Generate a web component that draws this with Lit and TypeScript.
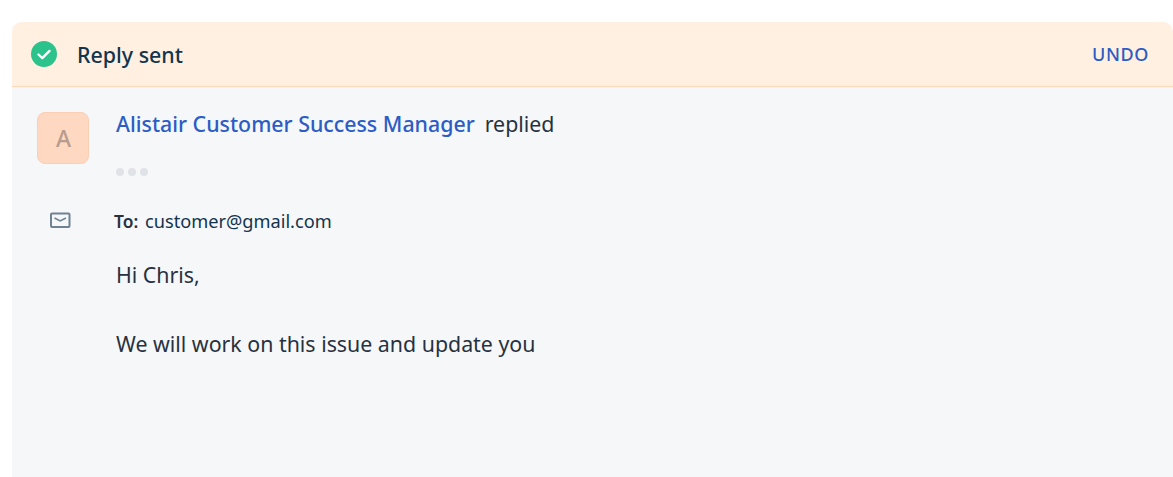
import { LitElement, css, html } from "lit";
import { customElement } from "lit/decorators.js";

@customElement("app-root")
export class AppRoot extends LitElement {
  static styles = css`
    :host {
      display: block;
      height: 477px;
      overflow: hidden;
      background: #fff;
      font-family: "Noto Sans", sans-serif;
      color: #27313f;
    }
    .wrap {
      padding: 22px 0 0 12px;
    }
    .panel {
      height: 455px;
      background: #f5f7f9;
      border-radius: 10px 10px 0 0;
    }
    .banner {
      height: 64px;
      box-sizing: content-box;
      display: flex;
      align-items: center;
      padding: 0 24px 0 19px;
      background: #fff0e1;
      border-bottom: 1px solid #ffd9b5;
      border-radius: 10px 10px 0 0;
    }
    .check {
      width: 26px;
      height: 26px;
      margin-right: 20px;
    }
    .title {
      flex: 1;
      padding-top: 1px;
      font-size: 21.4px;
      font-weight: 500;
      color: #12344d;
    }
    .undo {
      font-size: 18px;
      font-weight: 500;
      letter-spacing: 0.6px;
      color: #2c5cc5;
    }
    .thread {
      display: grid;
      grid-template-columns: 52px 1fr;
      column-gap: 27px;
      padding: 25px 0 0 25px;
    }
    .avatar {
      width: 52px;
      height: 52px;
      box-sizing: border-box;
      display: flex;
      align-items: center;
      justify-content: center;
      padding-left: 1px;
      background: #ffd8c1;
      border: 1px solid #fbcfb4;
      border-radius: 8px;
      font-size: 23px;
      font-weight: 500;
      color: #b89c8d;
    }
    .head {
      display: flex;
      align-items: baseline;
      gap: 10px;
      font-size: 21.35px;
      line-height: 24px;
    }
    .name {
      font-weight: 500;
      color: #2c5cc5;
    }
    .dots {
      display: flex;
      gap: 4px;
      margin-top: 32px;
    }
    .dots span {
      width: 8px;
      height: 8px;
      border-radius: 50%;
      background: #dfe2e7;
    }
    .mail {
      display: flex;
      justify-content: center;
      padding: 35px 7px 0 0;
    }
    .mail svg {
      width: 22px;
      height: 18px;
    }
    .to {
      margin: 33px 0 0 -2px;
      font-size: 18.2px;
      line-height: 24px;
      color: #12344d;
    }
    .to b {
      font-weight: 600;
      font-size: 17.4px;
      color: #27313f;
      margin-right: 2px;
    }
    .body {
      grid-column: 2;
      margin-top: 25px;
      font-size: 21.35px;
      line-height: 34.5px;
      color: #27313f;
    }
    .body p {
      margin: 0;
    }
    .body p + p {
      margin-top: 34.5px;
    }
  `;

  render() {
    return html`
      <div class="wrap">
        <div class="panel">
          <div class="banner">
            <svg class="check" viewBox="0 0 26 26">
              <circle cx="13" cy="13" r="13" fill="#2bc28c"></circle>
              <path d="M7.5 13.5l3.8 3.6 7.2-7.2" fill="none" stroke="#fff" stroke-width="2.4" stroke-linecap="round" stroke-linejoin="round"></path>
            </svg>
            <div class="title">Reply sent</div>
            <div class="undo">UNDO</div>
          </div>
          <div class="thread">
            <div class="avatar">A</div>
            <div>
              <div class="head">
                <span class="name">Alistair Customer Success Manager</span>
                <span>replied</span>
              </div>
              <div class="dots"><span></span><span></span><span></span></div>
            </div>
            <div class="mail">
              <svg viewBox="0 0 22 18">
                <rect x="2" y="2.5" width="18.5" height="13.5" rx="1" fill="none" stroke="#6f8293" stroke-width="2"></rect>
                <path d="M5.5 7l5.7 3 5.7-3" fill="none" stroke="#6f8293" stroke-width="1.5"></path>
              </svg>
            </div>
            <div class="to"><b>To:</b> customer@gmail.com</div>
            <div class="body">
              <p>Hi Chris,</p>
              <p>We will work on this issue and update you</p>
            </div>
          </div>
        </div>
      </div>
    `;
  }
}
